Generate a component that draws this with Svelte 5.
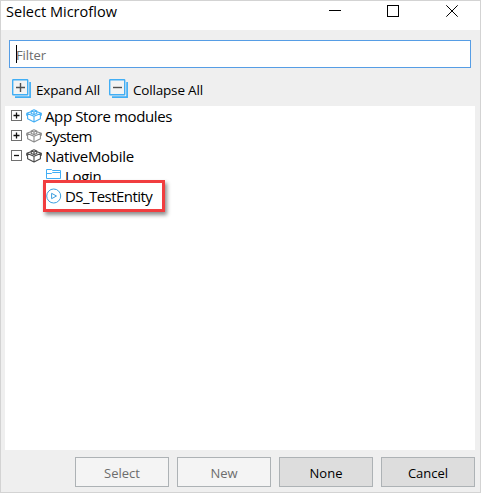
<script>
  const modules = [
    { name: 'App Store modules', color: '#41aef5', open: false, spacing: -0.38 },
    { name: 'System', color: '#8b8b8b', open: false, spacing: -0.65 },
    { name: 'NativeMobile', color: '#484848', open: true, spacing: -0.3 }
  ];
  const buttons = [
    { label: 'Select', disabled: true },
    { label: 'New', disabled: true },
    { label: 'None', disabled: false },
    { label: 'Cancel', disabled: false }
  ];
</script>

{#snippet stackIcon(plus)}
  <svg width="20" height="20" viewBox="0 0 20 20" fill="none">
    <path d="M18.1 3v15.2H3" stroke="#41aef5" stroke-width="1.7" />
    <rect x=".7" y=".7" width="15" height="15" rx=".5" fill="#f3f3f3" stroke="#41aef5" stroke-width="1.4" />
    <path d={plus ? 'M4 8.5h9M8.5 4v9' : 'M4 8.5h9'} stroke="#505050" stroke-width="1.4" />
  </svg>
{/snippet}

<div class="window">
  <header>
    <span class="title">Select Microflow</span>
    <svg class="controls" width="120" height="14" viewBox="0 0 120 14" fill="none" stroke="#000">
      <path d="M0 6.5h12" />
      <rect x="58.5" y="1.5" width="11" height="11" />
      <path d="M117.3 1.3l11.4 11.4M128.7 1.3L117.3 12.7" />
    </svg>
  </header>
  <div class="filter"><i class="caret"></i><span>Filter</span></div>
  <div class="toolbar">
    <div class="tool first">{@render stackIcon(true)}<span>Expand All</span></div>
    <div class="tool">{@render stackIcon(false)}<span>Collapse All</span></div>
  </div>
  <main>
    {#each modules as m}
      <div class="row">
        <svg class="toggle" width="11" height="11" viewBox="0 0 11 11" fill="none">
          <rect x=".5" y=".5" width="10" height="10" stroke="#707070" />
          <path d={m.open ? 'M3 5.5h5' : 'M2.5 5.5h6M5.5 2.5v6'} stroke="#111" stroke-width="1.3" />
        </svg>
        <svg class="cube" width="16" height="14" viewBox="0 0 16 14" fill="none" stroke={m.color} stroke-width="1.1" stroke-linejoin="round">
          <path d="M.7 4.3L5 2.7M11 2.7l4.3 1.6L8 7.2.7 4.3M1.6 4.8v5L8 13l6.4-3.2v-5M8 7.2V13" />
          <path d="M5.2 2v2.5L8 5.6l2.8-1.1V2L8 .8zM5.2 2L8 3.1 10.8 2M8 3.1v2.5" />
          <path d="M.7 4.3v2l1 .3M15.3 4.3v2l-1 .3" />
        </svg>
        <span style:letter-spacing="{m.spacing}px">{m.name}</span>
      </div>
    {/each}
    <div class="row child">
      <svg class="folder" width="15" height="12" viewBox="0 0 15 12" fill="none" stroke="#41aef5">
        <path d="M.5 9.5V.5h5l1 1h8v8zM.5 4.5h5l1-1h8" />
      </svg>
      <span class="login">Login</span>
    </div>
    <div class="marked">
      <svg width="16" height="16" viewBox="0 0 16 16" fill="none" stroke="#3c9fdf">
        <circle cx="7.7" cy="8" r="7" />
        <path d="M5.6 5.3v5.4L10.5 8z" />
      </svg>
      <span>DS_TestEntity</span>
    </div>
  </main>
  <footer>
    {#each buttons as b}
      <button disabled={b.disabled}>{b.label}</button>
    {/each}
  </footer>
</div>

<style>
  :global(body) { margin: 0; }
  .window {
    box-sizing: border-box;
    width: 481px;
    height: 493px;
    border: 1px solid #d3d3d3;
    background: #efefef;
    display: flex;
    flex-direction: column;
    font-family: "Open Sans", "Noto Sans", sans-serif;
    color: #000;
    overflow: hidden;
    white-space: nowrap;
  }
  svg { display: block; flex: none; overflow: visible; }
  header {
    height: 29px;
    flex: none;
    background: #fff;
    display: flex;
    justify-content: space-between;
    padding: 0 24px 0 5px;
  }
  .title { font-size: 14.5px; line-height: 21px; letter-spacing: 0.02px; }
  .controls { margin: 3px 7px 0 0; }
  .filter {
    box-sizing: border-box;
    height: 28px;
    flex: none;
    margin: 10px 9px 0 8px;
    border: 1px solid #569de5;
    background: #fff;
    display: flex;
    align-items: center;
    padding-left: 6px;
    font-size: 13px;
    color: #6d6d6d;
    letter-spacing: -0.1px;
  }
  .filter span { padding-top: 1px; }
  .caret { width: 1px; height: 18px; background: #000; margin-right: -1px; }
  .toolbar {
    height: 38px;
    flex: none;
    display: flex;
    gap: 9px;
    padding-left: 11px;
    font-size: 13.5px;
    line-height: 20px;
    letter-spacing: -0.18px;
  }
  .tool { display: flex; gap: 4px; padding-top: 11px; }
  .tool span { padding-top: 1px; }
  .tool.first span { width: 64px; }
  main {
    flex: 1;
    background: #fff;
    margin: 0 5px 0 4px;
    font-size: 15px;
    line-height: 20px;
  }
  .row { height: 20px; display: flex; align-items: center; padding-left: 6px; }
  .toggle { margin-top: -1px; }
  .cube { margin: 0 3.5px 0 3.5px; }
  .child { padding-left: 41px; gap: 4px; }
  .folder { margin-top: -2px; }
  .login { letter-spacing: -0.3px; }
  .marked {
    position: relative;
    box-sizing: border-box;
    width: 122px;
    height: 32px;
    margin: -6px 0 0 38px;
    border: 3px solid #f13d3f;
    background: #fff;
    box-shadow: 2px 3px 4px rgba(0, 0, 0, 0.45);
    display: flex;
    align-items: center;
    gap: 3px;
    letter-spacing: -0.55px;
  }
  footer {
    height: 42px;
    box-sizing: border-box;
    flex: none;
    display: flex;
    justify-content: flex-end;
    gap: 8px;
    padding: 7px 5px 5px 0;
  }
  button {
    box-sizing: border-box;
    width: 94px;
    height: 30px;
    padding: 2px 0 0;
    border: 1px solid #adb2b5;
    background: #ddd;
    font: 13px "Open Sans", "Noto Sans", sans-serif;
    color: #000;
  }
  button:disabled { background: #f4f4f4; color: #6d6d6d; }
</style>
